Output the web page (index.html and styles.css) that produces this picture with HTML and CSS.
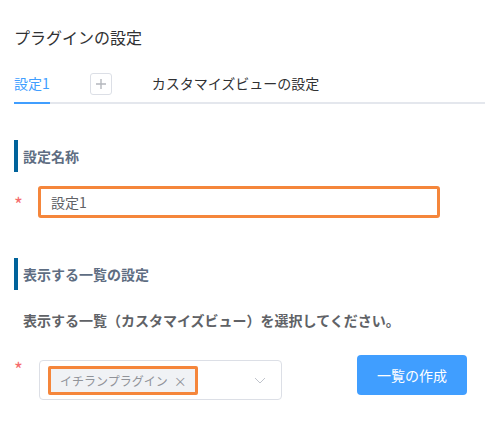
FILE: index.html
```html
<!DOCTYPE html>
<html lang="ja">
<head>
<meta charset="utf-8">
<link rel="stylesheet" href="styles.css">
</head>
<body>
<div class="page">
  <h1 class="title">プラグインの設定</h1>
  <div class="tabs">
    <div class="tab active">設定1</div>
    <div class="tab-add">
      <svg width="12" height="12" viewBox="0 0 12 12"><path d="M6 1v10M1 6h10" stroke="#b4b7bd" stroke-width="1.4" fill="none"/></svg>
    </div>
    <div class="tab">カスタマイズビューの設定</div>
  </div>

  <div class="section-head first">設定名称</div>
  <div class="field-row row-name">
    <span class="req req-name">*</span>
    <div class="input">設定1</div>
  </div>

  <div class="section-head second">表示する一覧の設定</div>
  <p class="desc">表示する一覧（カスタマイズビュー）を選択してください。</p>
  <div class="field-row row-list">
    <span class="req req-list">*</span>
    <div class="select">
      <span class="tag">イチランプラグイン<span class="tag-close">×</span></span>
      <svg class="chevron" width="12" height="7" viewBox="0 0 12 7"><path d="M1 1l5 5 5-5" stroke="#c0c4cc" stroke-width="1" fill="none"/></svg>
    </div>
    <button class="btn">一覧の作成</button>
  </div>
</div>
</body>
</html>
```
FILE: styles.css
```css
html, body {
  margin: 0;
  padding: 0;
  background: #fff;
}
body {
  font-family: "Noto Sans CJK JP", "Noto Sans", sans-serif;
  color: #303133;
}
.page {
  padding-left: 14px;
}
.title {
  margin: 25px 0 0;
  font-size: 16px;
  line-height: 24px;
  font-weight: normal;
  color: #303133;
}
.tabs {
  margin-top: 15px;
  display: flex;
  align-items: center;
  height: 38px;
  border-bottom: 2px solid #e4e7ed;
}
.tab {
  font-size: 14px;
  line-height: 38px;
  height: 38px;
  color: #303133;
  box-sizing: border-box;
}
.tab.active {
  color: #409eff;
  position: relative;
}
.tab.active::after {
  content: "";
  position: absolute;
  left: 0;
  right: 0;
  bottom: -2px;
  height: 2px;
  background: #409eff;
}
.tab-add {
  margin-left: 40px;
  margin-right: 40px;
  width: 20px;
  height: 20px;
  border: 1px solid #dcdfe6;
  border-radius: 3px;
  display: flex;
  align-items: center;
  justify-content: center;
  margin-top: 1px;
}
.tab-add svg { display: block; }
.section-head {
  border-left: 4px solid #00639b;
  padding-left: 5px;
  height: 32px;
  line-height: 32px;
  font-size: 14px;
  font-weight: bold;
  color: #5e6d82;
}
.section-head.first { margin-top: 36px; }
.section-head.second { margin-top: 40px; }
.field-row {
  display: flex;
  align-items: flex-start;
}
.row-name { margin-top: 14px; }
.req {
  width: 24px;
  color: #f56c6c;
  font-size: 19px;
  line-height: 19px;
  padding-left: 0;
  box-sizing: border-box;
}
.req-name { margin-top: 8px; }
.req-list { margin-top: 4px; width: 25px; }
.input {
  width: 402px;
  height: 32px;
  box-sizing: border-box;
  border: 3px solid #f5863b;
  border-radius: 3px;
  padding-left: 10px;
  font-size: 14px;
  line-height: 26px;
  color: #606266;
}
.desc {
  margin: 20px 0 0;
  padding-left: 9px;
  font-size: 14px;
  line-height: 20px;
  font-weight: bold;
  color: #606266;
}
.row-list { margin-top: 25px; }
.select {
  margin-top: 5px;
  width: 243px;
  height: 40px;
  box-sizing: border-box;
  border: 1px solid #dcdfe6;
  border-radius: 4px;
  display: flex;
  align-items: center;
  padding-left: 8px;
  padding-right: 15px;
}
.tag {
  height: 29px;
  box-sizing: border-box;
  border: 3px solid #f5863b;
  border-radius: 2px;
  background: #f0f2f5;
  padding: 0 8px 0 9px;
  font-size: 12px;
  line-height: 23px;
  color: #909399;
  display: flex;
  align-items: center;
  margin-top: 1px;
}
.tag-close {
  margin-left: 6px;
  font-size: 13px;
}
.chevron {
  margin-left: auto;
  display: block;
}
.btn {
  margin-left: 75px;
  width: 110px;
  height: 40px;
  border: none;
  border-radius: 4px;
  background: #409eff;
  color: #fff;
  font-family: inherit;
  font-size: 14px;
  padding: 0;
}
```
